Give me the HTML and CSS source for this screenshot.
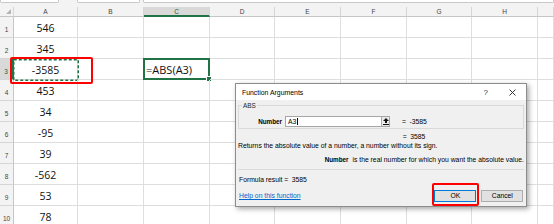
FILE: index.html
```html
<!DOCTYPE html>
<html>
<head>
<meta charset="utf-8">
<link rel="stylesheet" href="styles.css">
</head>
<body>
<div class="topstrip"><span class="tb tb1"></span><span class="tb tb2"></span><span class="tb tb3"></span></div>
<div class="sheet">
  <div class="corner"><span class="tri"></span></div>
  <div class="ch">A</div><div class="ch">B</div><div class="ch sel">C</div><div class="ch">D</div><div class="ch">E</div><div class="ch">F</div><div class="ch">G</div><div class="ch">H</div><div class="ch"></div>

  <div class="rh">1</div><div class="c num">546</div><div class="c"></div><div class="c"></div><div class="c"></div><div class="c"></div><div class="c"></div><div class="c"></div><div class="c"></div><div class="c"></div>
  <div class="rh">2</div><div class="c num">345</div><div class="c"></div><div class="c"></div><div class="c"></div><div class="c"></div><div class="c"></div><div class="c"></div><div class="c"></div><div class="c"></div>
  <div class="rh sel">3</div><div class="c num copy">-3585<svg class="ants" width="66" height="22" viewBox="0 0 66 22"><rect x="0.75" y="0.75" width="64.5" height="20.5" fill="none" stroke="#217346" stroke-width="1.5" stroke-dasharray="3 2"/></svg></div><div class="c"></div><div class="c active">=ABS(A3)</div><div class="c"></div><div class="c"></div><div class="c"></div><div class="c"></div><div class="c"></div><div class="c"></div>
  <div class="rh">4</div><div class="c num">453</div><div class="c"></div><div class="c"></div><div class="c"></div><div class="c"></div><div class="c"></div><div class="c"></div><div class="c"></div><div class="c"></div>
  <div class="rh">5</div><div class="c num">34</div><div class="c"></div><div class="c"></div><div class="c"></div><div class="c"></div><div class="c"></div><div class="c"></div><div class="c"></div><div class="c"></div>
  <div class="rh">6</div><div class="c num">-95</div><div class="c"></div><div class="c"></div><div class="c"></div><div class="c"></div><div class="c"></div><div class="c"></div><div class="c"></div><div class="c"></div>
  <div class="rh">7</div><div class="c num">39</div><div class="c"></div><div class="c"></div><div class="c"></div><div class="c"></div><div class="c"></div><div class="c"></div><div class="c"></div><div class="c"></div>
  <div class="rh">8</div><div class="c num">-562</div><div class="c"></div><div class="c"></div><div class="c"></div><div class="c"></div><div class="c"></div><div class="c"></div><div class="c"></div><div class="c"></div>
  <div class="rh">9</div><div class="c num">53</div><div class="c"></div><div class="c"></div><div class="c"></div><div class="c"></div><div class="c"></div><div class="c"></div><div class="c"></div><div class="c"></div>
  <div class="rh">10</div><div class="c num">78</div><div class="c"></div><div class="c"></div><div class="c"></div><div class="c"></div><div class="c"></div><div class="c"></div><div class="c"></div><div class="c"></div>
</div>

<div class="mark m1"></div>

<div class="dlg">
  <div class="dlg-title">
    <span class="dlg-name">Function Arguments</span>
    <span class="dlg-q">?</span>
    <svg class="dlg-x" width="7" height="7" viewBox="0 0 7 7"><path d="M0.5 0.5L6.5 6.5M6.5 0.5L0.5 6.5" stroke="#222" stroke-width="0.9"/></svg>
  </div>
  <div class="dlg-body">
    <fieldset class="grp">
      <legend>ABS</legend>
      <div class="arg-row">
        <span class="arg-lbl">Number</span>
        <span class="arg-input"><span class="arg-text">A3<span class="caret"></span></span><span class="arg-btn"><svg width="6" height="7" viewBox="0 0 6 7"><path d="M3 0L6 3H4V5H2V3H0Z" fill="#111"/><rect x="0" y="6" width="6" height="1" fill="#111"/></svg></span></span>
        <span class="eq">=</span><span class="val">-3585</span>
      </div>
    </fieldset>
    <div class="res-row"><span class="eq">=</span><span class="val">3585</span></div>
    <div class="desc">Returns the absolute value of a number, a number without its sign.</div>
    <div class="desc2"><b>Number</b><span>is the real number for which you want the absolute value.</span></div>
    <div class="sep"></div>
    <div class="formula"><span class="f-lbl">Formula result =</span><span>3585</span></div>
    <div class="foot">
      <a class="help" href="#">Help on this function</a>
      <span class="btn ok">OK</span>
      <span class="btn cancel">Cancel</span>
    </div>
  </div>
</div>

<div class="mark m2"></div>
</body>
</html>
```
FILE: styles.css
```css
* { box-sizing: border-box; margin: 0; padding: 0; }
body {
  margin: 0;
  width: 554px;
  height: 224px;
  overflow: hidden;
  background: #fff;
  font-family: "Liberation Sans", Arial, sans-serif;
  position: relative;
}
.topstrip {
  height: 7px;
  background: #f3f3f3;
  display: flex;
  align-items: flex-start;
}
.tb {
  height: 3px;
  background: #fff;
  border: 1px solid #c8c8c8;
  border-top: none;
  border-radius: 0 0 2px 2px;
}
.tb1 { width: 59px; }
.tb2 { width: 63px; margin-left: 18px; }
.tb3 { flex: 1; margin-left: 3px; }

.sheet {
  display: grid;
  grid-template-columns: 14px 64px 66px 66px 65px 66px 66px 65px 66px 1fr;
  grid-template-rows: 10px repeat(10, 21px);
}
.corner, .ch {
  background: #f3f3f3;
  border-right: 1px solid #d6d6d6;
  border-bottom: 1px solid #c6c6c6;
  font-size: 6.5px;
  color: #444;
  display: flex;
  align-items: center;
  justify-content: center;
}
.corner { position: relative; }
.tri {
  position: absolute;
  right: 2px;
  bottom: 2px;
  width: 0;
  height: 0;
  border-left: 5px solid transparent;
  border-bottom: 5px solid #b4b4b4;
}
.ch.sel {
  background: #d9d9d9;
  border-bottom: 2px solid #217346;
  color: #1d5e37;
}
.rh {
  background: #f3f3f3;
  border-right: 1px solid #c6c6c6;
  border-bottom: 1px solid #d6d6d6;
  font-size: 6.5px;
  color: #444;
  display: flex;
  justify-content: center;
  align-items: flex-end;
  padding-bottom: 4px;
}
.rh.sel {
  background: #d9d9d9;
  border-right: 2px solid #217346;
  color: #1d5e37;
}
.c {
  border-right: 1px solid #dedede;
  border-bottom: 1px solid #dedede;
  position: relative;
}
.num {
  font-family: "Open Sans", sans-serif;
  font-size: 10.5px;
  line-height: 13px;
  padding-top: 5px;
  text-align: center;
  color: #111;
}
.ants {
  position: absolute;
  left: -1px;
  top: 0;
}
.active {
  font-family: "Open Sans", sans-serif;
  font-size: 11px;
  line-height: 14px;
  padding-top: 4px;
  padding-left: 2px;
  color: #111;
}
.active::before {
  content: "";
  position: absolute;
  left: -1px;
  top: -1px;
  right: -1px;
  bottom: -1px;
  border: 2px solid #217346;
}
.active::after {
  content: "";
  position: absolute;
  right: -3px;
  bottom: -3px;
  width: 4px;
  height: 4px;
  background: #217346;
  border: 1px solid #fff;
}

.mark {
  position: absolute;
  border: 2px solid #ff0000;
  border-radius: 2px;
}
.m1 { left: 10px; top: 57px; width: 83px; height: 27px; }
.m2 { left: 432px; top: 183px; width: 47px; height: 23px; z-index: 2; }

.dlg {
  position: absolute;
  left: 235px;
  top: 83px;
  width: 292px;
  height: 124px;
  background: #f0f0f0;
  border: 1px solid #8c8c8c;
  box-shadow: 2px 2px 5px rgba(0, 0, 0, 0.35);
  font-size: 6.8px;
  color: #000;
  display: flex;
  flex-direction: column;
}
.dlg-title {
  height: 16px;
  background: #fff;
  display: flex;
  align-items: center;
  padding-left: 6px;
  font-size: 6.9px;
}
.dlg-name { flex: 1; }
.dlg-q {
  font-size: 8px;
  color: #333;
  margin-right: 21px;
}
.dlg-x { margin-right: 10px; }
.dlg-body {
  flex: 1;
  padding: 1.7px 2px 4px 2px;
  display: flex;
  flex-direction: column;
}
.grp {
  border: 1px solid #d9d9d9;
  padding: 6px 0 1px 0;
  min-width: 0;
}
.grp legend {
  margin-left: 3px;
  padding: 0 1px;
  font-size: 6.4px;
  line-height: 8px;
  color: #222;
}
.arg-row {
  display: flex;
  align-items: center;
  height: 11px;
}
.arg-lbl {
  width: 43px;
  text-align: right;
  font-weight: bold;
  font-size: 6.3px;
}
.arg-input {
  margin-left: 3px;
  width: 105px;
  height: 11px;
  background: #fff;
  border: 1px solid #a6a6a6;
  display: flex;
}
.arg-text {
  flex: 1;
  padding-left: 2px;
  line-height: 9px;
  display: flex;
  align-items: center;
}
.caret {
  display: inline-block;
  width: 1px;
  height: 7px;
  background: #000;
  margin-left: 0.5px;
}
.arg-btn {
  width: 8px;
  border-left: 1px solid #adadad;
  background: #e9e9e9;
  display: flex;
  align-items: center;
  justify-content: center;
}
.eq { margin-left: 12px; }
.val { margin-left: 3.5px; }
.res-row {
  margin-top: 3px;
  line-height: 9px;
  padding-left: 152.7px;
  display: flex;
}
.desc {
  margin-top: 0.7px;
  line-height: 9px;
}
.desc2 {
  margin-top: 4.3px;
  line-height: 9px;
  display: flex;
  justify-content: flex-end;
  gap: 4px;
}
.desc2 b { font-size: 6.3px; }
.sep {
  margin-top: 5.2px;
  border-top: 1px solid #dadada;
}
.formula {
  margin-top: 5.5px;
  line-height: 9px;
  display: flex;
  padding-left: 1px;
}
.f-lbl { width: 52.7px; }
.foot {
  margin-top: 5.5px;
  display: flex;
  align-items: center;
  height: 12px;
}
.help {
  flex: 1;
  color: #0066cc;
  text-decoration: underline;
  padding-left: 1px;
}
.btn {
  width: 42px;
  height: 12px;
  background: #e1e1e1;
  border: 1px solid #adadad;
  display: flex;
  align-items: center;
  justify-content: center;
}
.btn.ok { border-color: #0078d7; }
.btn.cancel { margin-left: 5px; margin-right: 0.7px; }
```
